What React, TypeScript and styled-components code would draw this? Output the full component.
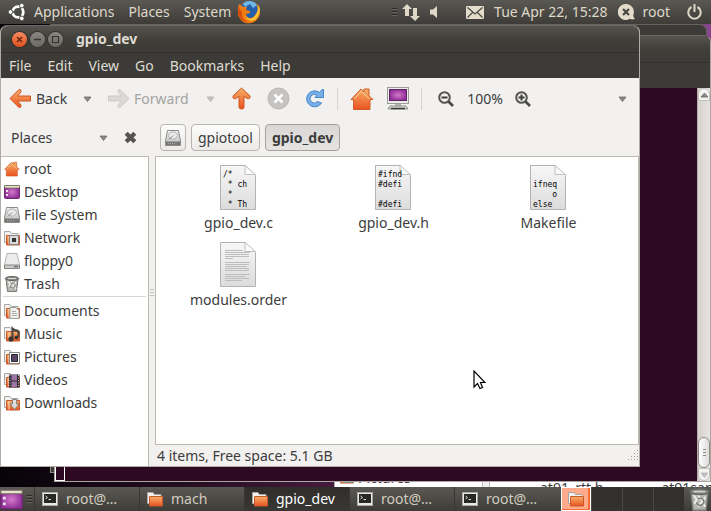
import React from "react";
import styled, { createGlobalStyle, css } from "styled-components";

const GlobalStyle = createGlobalStyle`
  * { box-sizing: border-box; }
  html, body { margin: 0; height: 100%; overflow: hidden; }
  body { font: 14px/20px "Noto Sans", "Open Sans", sans-serif; color: #3c3c3c; }
  #root { height: 100%; }
  button, select { font: inherit; color: inherit; border: 0; padding: 0; margin: 0; background: none; }
  svg { display: block; flex: none; }
`;

const Screen = styled.div`
  display: flex;
  flex-direction: column;
  height: 100vh;
`;

const panelSurface = css`
  display: flex;
  align-items: center;
  flex: none;
  height: 24px;
  background: linear-gradient(#5a5853, #3d3c38);
  color: #dfd8c8;
  white-space: nowrap;
`;

const TopPanel = styled.header`
  ${panelSurface}
  justify-content: space-between;
  padding: 0 9px 0 8px;
`;

const PanelGroup = styled.div<{ $gap: number }>`
  display: flex;
  align-items: center;
  gap: ${(p) => p.$gap}px;
`;

const PanelButton = styled.button`
  display: flex;
  align-items: center;
  gap: 8px;
`;

const Desktop = styled.main`
  position: relative;
  flex: 1;
  min-height: 0;
  overflow: hidden;
  background: linear-gradient(90deg, #070308, #2a1026 30%, #5b2450 60%, #87458c);
`;

const titleSurface = css`
  background: linear-gradient(#55534e, #3f3e39 14px, #3c3b37);
`;

const RearWindow = styled.div`
  position: absolute;
  left: 50px;
  top: 0;
  right: 4px;
  bottom: 14px;
  border: 1px solid #8d8a84;
  border-top-color: #65635d;
  border-right-color: #65635d;
  border-radius: 0 7px 0 0;
  background: #3c3b37;
`;

const TerminalWindow = styled.section`
  position: absolute;
  left: 54px;
  top: 11px;
  right: 0;
  bottom: 5px;
  display: flex;
  flex-direction: column;
  border: 1px solid #aaa5a0;
  border-top-color: #6a6862;
  border-radius: 7px 7px 0 0;
  overflow: hidden;
  background: #3c3b37;
`;

const TerminalTitle = styled.div`
  ${titleSurface}
  flex: none;
  height: 27px;
  border-bottom: 1px solid #33322e;
`;

const TerminalMenu = styled.div`
  flex: none;
  height: 25px;
`;

const TerminalBody = styled.div`
  display: flex;
  flex: 1;
  min-height: 0;
  background: #2d0922;
`;

const TerminalText = styled.div`
  display: flex;
  flex: 1;
  align-items: flex-end;
`;

const TextCaret = styled.span`
  width: 10px;
  height: 18px;
  border: 1px solid #fff;
`;

const ScrollTrack = styled.div`
  display: flex;
  flex-direction: column;
  align-items: center;
  justify-content: space-between;
  width: 13px;
  border-left: 1px solid #b5afab;
  background: linear-gradient(90deg, #d8d0cd, #e6e4e2);
`;

const ScrollEnd = styled.div`
  display: flex;
  flex-direction: column;
  width: 12px;
`;

const ScrollButton = styled.button<{ $end?: boolean }>`
  display: flex;
  align-items: center;
  justify-content: center;
  width: 12px;
  height: 13px;
  border: 1px solid #c3bfbb;
  border-radius: ${(p) => (p.$end ? "0 0 6px 6px" : "6px 6px 0 0")};
  background: #f3f2f1;
`;

const ScrollThumb = styled.div`
  display: flex;
  align-items: center;
  justify-content: center;
  height: 31px;
  border: 1px solid #8f8b87;
  border-radius: 6px;
  background: linear-gradient(90deg, #fff, #dedbd8);
`;

const HiddenBrowser = styled.div`
  position: absolute;
  left: 334px;
  right: 0;
  bottom: 0;
  height: 6px;
  display: flex;
  overflow: hidden;
  background: #fff;
`;

const HiddenSidebar = styled.div`
  display: flex;
  flex: none;
  gap: 4px;
  width: 148px;
  padding-left: 3px;
  border-left: 1px solid #b5b1ac;
  margin-top: -13px;
`;

const HiddenSplit = styled.div`
  flex: none;
  width: 8px;
  border: solid #c2beb9;
  border-width: 0 1px;
  background: #f2f1f0;
`;

const HiddenFiles = styled.div`
  display: flex;
  gap: 58px;
  padding-left: 50px;
  white-space: nowrap;
  line-height: 14px;
`;

const FileWindow = styled.section`
  position: absolute;
  left: 0;
  top: 1px;
  right: 71px;
  bottom: 20px;
  display: flex;
  flex-direction: column;
  border: 1px solid #b0aba5;
  border-top-color: #6a6862;
  border-radius: 7px 7px 0 0;
  overflow: hidden;
  background: #f2f1f0;
`;

const TitleBar = styled.div`
  ${titleSurface}
  display: flex;
  align-items: center;
  gap: 3px;
  flex: none;
  height: 27px;
  padding-left: 11px;
  border-bottom: 1px solid #33322e;
  color: #dfdbd2;
`;

const WindowButton = styled.button<{ $close?: boolean }>`
  display: grid;
  place-items: center;
  width: 15px;
  height: 15px;
  border-radius: 50%;
  background: ${(p) => (p.$close ? "linear-gradient(#f58a62, #e0501c)" : "linear-gradient(#8a8780, #6b6963)")};
  box-shadow: 0 0 0 1px #34332f;
`;

const WindowTitle = styled.h1`
  margin: 0 0 0 10px;
  font-size: 14px;
  line-height: 20px;
  font-weight: 700;
`;

const MenuBar = styled.nav`
  display: flex;
  align-items: center;
  gap: 16px;
  flex: none;
  height: 25px;
  padding-left: 8px;
  background: #3c3b37;
  color: #dfdbd2;
`;

const Toolbar = styled.div`
  display: flex;
  align-items: center;
  flex: none;
  height: 41px;
`;

const ToolButton = styled.button<{ $width: number }>`
  display: flex;
  align-items: center;
  justify-content: center;
  flex: none;
  width: ${(p) => p.$width}px;
  height: 32px;
`;

const LabelledTool = styled(ToolButton)`
  justify-content: flex-start;
  gap: 4px;
  padding-left: 4px;
  margin-left: 4px;
  &:disabled { color: #a5a3a0; }
`;

const Divider = styled.span`
  width: 1px;
  height: 22px;
  margin: 0 6px 0 5px;
  background: #d6d3d0;
`;

const ZoomLevel = styled.output`
  width: 42px;
  text-align: center;
`;

const Spacer = styled.span`
  flex: 1;
`;

const LocationRow = styled.div`
  display: flex;
  align-items: center;
  flex: none;
  height: 37px;
`;

const SidebarHead = styled.div`
  display: flex;
  align-items: center;
  flex: none;
  width: 159px;
  padding-left: 10px;
`;

const PlaceChooser = styled.label`
  display: grid;
  grid-template-columns: 1fr 10px;
  align-items: center;
  width: 98px;
  select { appearance: none; grid-area: 1 / 1 / 2 / 3; outline: 0; }
  svg { grid-area: 1 / 2; pointer-events: none; }
`;

const CloseSidebar = styled.button`
  margin-left: 15px;
`;

const PathBar = styled.nav`
  display: flex;
  gap: 5px;
`;

const PathButton = styled.button<{ $current?: boolean; $iconOnly?: boolean }>`
  display: flex;
  align-items: center;
  height: 27px;
  padding: 0 ${(p) => (p.$iconOnly ? 4 : 6)}px;
  border: 1px solid ${(p) => (p.$current ? "#a5a19b" : "#b9b5af")};
  border-radius: 4px;
  background: ${(p) => (p.$current ? "linear-gradient(#d9d7d5, #e6e4e2)" : "linear-gradient(#fcfcfc, #eceae8)")};
  font-weight: ${(p) => (p.$current ? 700 : 400)};
`;

const Panes = styled.div`
  display: flex;
  flex: 1;
  min-height: 0;
`;

const Sidebar = styled.aside`
  flex: none;
  width: 148px;
  border: solid #bdb9b3;
  border-width: 1px 1px 0 0;
  background: #fff;
`;

const PlaceList = styled.ul`
  margin: 0;
  padding: 0;
  list-style: none;
`;

const Place = styled.button`
  display: flex;
  align-items: center;
  gap: 4px;
  width: 100%;
  height: 23px;
  padding-left: 3px;
`;

const PlaceRule = styled.hr`
  height: 1px;
  margin: 1px 2px 2px;
  border: 0;
  background: #dad8d5;
`;

const Splitter = styled.div`
  display: flex;
  align-items: center;
  justify-content: center;
  width: 6px;
  padding-bottom: 36px;
`;

const MainColumn = styled.div`
  display: flex;
  flex-direction: column;
  flex: 1;
  min-width: 0;
`;

const FileGrid = styled.ul`
  display: grid;
  grid-template-columns: repeat(auto-fill, 155px);
  align-content: start;
  grid-auto-rows: 77px;
  flex: 1;
  margin: 0;
  padding: 8px 0 0 5px;
  list-style: none;
  border: 1px solid #bdb9b3;
  background: #fff;
`;

const FileItem = styled.button`
  display: flex;
  flex-direction: column;
  align-items: center;
  gap: 2px;
  width: 100%;
`;

const Thumb = styled.span`
  display: grid;
  width: 37px;
  height: 46px;
  > * { grid-area: 1 / 1; }
`;

const Preview = styled.pre`
  margin: 0;
  padding: 5px 0 0 3px;
  overflow: hidden;
  font: 8px/10px "DejaVu Sans Mono", monospace;
  color: #000;
  text-align: left;
`;

const StatusBar = styled.footer`
  display: flex;
  align-items: center;
  justify-content: space-between;
  flex: none;
  height: 21px;
  padding-left: 2px;
`;

const Pointer = styled.div`
  position: absolute;
  left: 473px;
  top: 346px;
`;

const BottomPanel = styled.footer`
  ${panelSurface}
`;

const ShowDesktop = styled.button`
  display: flex;
  flex: none;
  width: 27px;
`;

const TaskList = styled.div`
  display: flex;
  flex: 1;
  min-width: 0;
  margin-left: 2px;
`;

const Task = styled.button<{ $active?: boolean }>`
  display: flex;
  align-items: center;
  gap: 8px;
  flex: 1;
  min-width: 0;
  height: 24px;
  padding-left: 7px;
  border-left: 1px solid #383733;
  background: ${(p) => (p.$active ? "linear-gradient(#2f2e2b, #383733)" : "none")};
  color: ${(p) => (p.$active ? "#fff" : "#d2ccbf")};
`;

const Workspaces = styled.div`
  display: flex;
  flex: none;
  gap: 1px;
  margin-left: 2px;
  background: #4a4945;
`;

const Workspace = styled.button<{ $active?: boolean }>`
  display: flex;
  align-items: center;
  justify-content: center;
  width: 30px;
  height: 24px;
  background: ${(p) => (p.$active ? "#ffab8b" : "#32312e")};
  border: ${(p) => (p.$active ? "1px solid #fff" : "0")};
  box-shadow: ${(p) => (p.$active ? "inset -2px 0 #f06c38, inset 0 -1px #f06c38" : "none")};
`;

const TrashApplet = styled.button`
  flex: none;
  width: 23px;
  margin-left: 4px;
`;

const Gradients = () => (
  <defs>
    <linearGradient id="orange" x1="0" y1="0" x2="0" y2="1">
      <stop offset="0" stopColor="#f6b06a" /><stop offset="1" stopColor="#ea5320" />
    </linearGradient>
    <linearGradient id="metal" x1="0" y1="0" x2="0" y2="1">
      <stop offset="0" stopColor="#f5f5f5" /><stop offset="1" stopColor="#b9b9b9" />
    </linearGradient>
    <radialGradient id="violet">
      <stop offset="0" stopColor="#d37ac8" /><stop offset="1" stopColor="#93309a" />
    </radialGradient>
    <linearGradient id="page" x1="0" y1="0" x2="0" y2="1">
      <stop offset="0" stopColor="#f7f7f7" /><stop offset="1" stopColor="#dcdcdc" />
    </linearGradient>
  </defs>
);

type IconProps = { w: number; h?: number; box: string; children: React.ReactNode };
const Icon = ({ w, h = w, box, children }: IconProps) => (
  <svg width={w} height={h} viewBox={box} aria-hidden="true"><Gradients />{children}</svg>
);

const UbuntuLogo = () => (
  <Icon w={18} box="0 0 18 18">
    <circle cx="10" cy="9" r="5.3" fill="none" stroke="#fff" strokeWidth="2.8" />
    <path d="M10 9 0 9M10 9 15 .4M10 9 15 17.6" stroke="#4c4a46" strokeWidth="1.6" />
    <g fill="#fff" stroke="#4c4a46" strokeWidth=".9"><circle cx="2.5" cy="9" r="2.3" /><circle cx="13.8" cy="2.6" r="2.3" /><circle cx="13.8" cy="15.4" r="2.3" /></g>
  </Icon>
);

const Firefox = () => (
  <Icon w={24} box="0 0 24 24">
    <circle cx="12" cy="12" r="11" fill="#e66a0c" />
    <circle cx="12" cy="9.8" r="9" fill="#255fa9" />
    <path d="M6 4C9 0 17 0 20 5L16 8 13 4 8 7Z" fill="#6eb8e8" />
    <path d="M2 4C0 10 0 20 9 23 19 25 25 15 22 6 22 11 19 13 18 15 15 20 9 18 9 14L13 13 13 11 9 10 10 7 7 7C4 6 3 5 2 4Z" fill="#ef7c13" />
    <path d="M20 4C22 9 20 14 18 16 15 20 10 19 8 16 10 23 20 22 22 14 24 9 22 6 20 4Z" fill="#fbc63a" />
    <path d="M2 6C2 9 4 10 5 13 4 17 7 21 12 22 5 22 1 17 1 12Z" fill="#d44b0c" />
  </Icon>
);

const Grip = () => (
  <Icon w={5} h={10} box="0 0 5 10"><path d="M0 1.5H5M0 4.5H5M0 7.5H5" stroke="#2c2b28" /><path d="M0 2.5H5M0 5.5H5M0 8.5H5" stroke="#67655f" /></Icon>
);

const NetworkArrows = () => (
  <Icon w={18} h={17} box="0 0 18 17"><path d="M5 0 10 5H7V12H3V5H0ZM13 17 8 12H11V4H15V12H18Z" fill="#dfd8c8" /></Icon>
);
const Speaker = () => (
  <Icon w={8} h={12} box="0 0 8 12"><path d="M0 3.5H3L7 0V12L3 8.5H0Z" fill="#dfd8c8" /></Icon>
);
const Mail = () => (
  <Icon w={18} h={13} box="0 0 18 13"><rect width="18" height="13" rx="1" fill="#e4dccb" /><path d="M1.5 1.5 9 8 16.5 1.5M1.5 11.5 6.5 6.5M16.5 11.5 11.5 6.5" fill="none" stroke="#4a4843" strokeWidth="1.2" /></Icon>
);
const UserStatus = () => (
  <Icon w={17} h={16} box="0 0 17 16"><path d="M8 0A8 8 0 1 0 12 14.8Q14 16 17 15 15 13 15.3 11A8 8 0 0 0 8 0Z" fill="#e4dccb" /><path d="M5 5 11 11M11 5 5 11" stroke="#4a4843" strokeWidth="2.2" /></Icon>
);
const Power = () => (
  <Icon w={15} h={16} box="0 0 15 16"><path d="M4.5 3A6.2 6.2 0 1 0 10.5 3M7.5 0V8" fill="none" stroke="#dfd8c8" strokeWidth="2" /></Icon>
);

const Caret = ({ up, pale }: { up?: boolean; pale?: boolean }) => (
  <Icon w={9} h={6} box="0 0 9 6"><path d={up ? "M1 5H8L4.5 1Z" : "M1 1H8L4.5 5.5Z"} fill={pale ? "#c4c2c0" : "#8b8987"} stroke={pale ? "#b5b3b1" : "#6b6967"} strokeWidth=".8" /></Icon>
);

const arrowShape = "M10 1.5Q12.5 1 12 4L8.5 8H21.5V13H8.5L12 17Q12.5 20 10 19.5L1 10.5Z";
const BackArrow = () => (
  <Icon w={23} h={21} box="0 0 23 21"><path d={arrowShape} fill="url(#orange)" stroke="#d0521c" strokeLinejoin="round" /></Icon>
);
const ForwardArrow = () => (
  <Icon w={23} h={21} box="0 0 23 21"><g transform="matrix(-1 0 0 1 23 0)"><path d={arrowShape} fill="#dcdad8" stroke="#cbc9c7" strokeLinejoin="round" /></g></Icon>
);
const UpArrow = () => (
  <Icon w={19} h={23} box="0 0 19 23"><path d="M9.5 1 18 9Q18.500 12.500 15 11.500L12 9V20Q12 22 9.500 22T7 20V9L4 11.500Q.5 12.500 1 9Z" fill="url(#orange)" stroke="#d0521c" strokeLinejoin="round" /></Icon>
);
const Stop = () => (
  <Icon w={23} box="0 0 23 23"><circle cx="11.5" cy="11.5" r="10.5" fill="#c6c4c2" stroke="#b9b7b5" /><path d="M7.5 7.5 15.5 15.5M15.5 7.5 7.5 15.5" stroke="#fff" strokeWidth="2.6" /></Icon>
);
const Reload = () => (
  <Icon w={21} box="0 0 21 21">
    <path d="M17.500 15A8 8 0 1 1 15.500 4.500L18 1.500H19.500V9.500H11L13 7.300A4.300 4.300 0 1 0 13.500 13.500Z" fill="#78afe6" stroke="#4584c8" strokeLinejoin="round" />
  </Icon>
);
const Home = ({ size = 24 }: { size?: number }) => (
  <Icon w={size} box="0 0 24 24"><path d="M1 12.5 11 2 14 5V2H19V9L23 12.5H20V22.5H3.5V12.5Z" fill="url(#orange)" stroke="#cf5b25" strokeLinejoin="round" /><path d="M4 12 11 4.5 20 12" stroke="#fbd09c" fill="none" /></Icon>
);
const Computer = () => (
  <Icon w={22} h={23} box="0 0 22 23"><rect x=".5" y=".5" width="21" height="16" fill="#ececea" stroke="#9b9b98" /><rect x="2.5" y="2.5" width="17" height="11" fill="url(#violet)" stroke="#5c2563" /><path d="M8 17H14V19H8Z" fill="#b5b5b3" /><path d="M3 19H19L21 22H1Z" fill="#dadad8" stroke="#8d8d8a" /><path d="M4 21.5H18" stroke="#393937" strokeWidth="1.5" /></Icon>
);
const Magnifier = ({ plus }: { plus?: boolean }) => (
  <Icon w={16} box="0 0 16 16"><circle cx="6.5" cy="6.5" r="5.3" fill="none" stroke="#555452" strokeWidth="2" /><path d="M10.5 10.5 15 15" stroke="#4a4947" strokeWidth="2.6" /><path d={plus ? "M3.5 6.5H9.5M6.5 3.5V9.5" : "M3.5 6.5H9.5"} stroke="#3d3c3a" strokeWidth="2" /></Icon>
);
const Cross = () => (
  <Icon w={13} box="0 0 12 12"><path d="M2 2 10 10M10 2 2 10" stroke="#555452" strokeWidth="4" /></Icon>
);
const Drive = () => (
  <Icon w={16} box="0 0 16 16"><path d="M2.5.5H13.5L15.5 11V15.5H.5V11Z" fill="url(#metal)" stroke="#8a8a88" /><ellipse cx="8" cy="5.5" rx="4.6" ry="3.6" fill="#e9e9e9" stroke="#b0b0ae" /><path d="M8 5.5 4 9.5" stroke="#888" /><path d="M1 11.5H15V15H1Z" fill="#777775" /><path d="M3 13.5H11" stroke="#aaa" strokeDasharray="1 1" /></Icon>
);
const Floppy = () => (
  <Icon w={16} box="0 0 16 16"><path d="M3 .5H13L15.5 11.5V15.5H.5V11.5Z" fill="#ececec" stroke="#b3b3b1" /><path d="M.5 12H15.5V15.5H.5Z" fill="#c8c8c6" stroke="#858583" /><path d="M10 13.7H14" stroke="#555" /></Icon>
);
const DesktopIcon = ({ w = 16, h = 14 }: { w?: number; h?: number }) => (
  <Icon w={w} h={h} box="0 0 16 14"><rect x=".5" y=".5" width="15" height="13" rx="1" fill="url(#violet)" stroke="#6b2a70" /><path d="M.5.5H15.5V3H.5Z" fill="#e7e3ce" stroke="#716e58" strokeWidth=".8" /><path d="M2 5H4V7H2ZM2 9H4V11H2Z" fill="#f0dff0" /></Icon>
);
const TrashIcon = ({ w = 16, h = 16 }: { w?: number; h?: number }) => (
  <Icon w={w} h={h} box="0 0 16 16"><path d="M2 3H14L12.5 15.5H3.5Z" fill="#b3b5b1" stroke="#777975" /><path d="M4 5 6 8 4.5 11M7 5 10 9 7 13M12 6 10 10 12 13" stroke="#ececea" strokeWidth="1.4" fill="none" /><ellipse cx="8" cy="2.5" rx="6.8" ry="2" fill="#8d8f8b" stroke="#5f615d" /><path d="M4 2.5H12" stroke="#d5d6d3" /><path d="M7 7.5A2.5 2.5 0 1 1 6 10" fill="none" stroke="#777975" /></Icon>
);

type Emblem = "none" | "network" | "document" | "music" | "picture" | "video" | "download";
const emblems: Record<Emblem, React.ReactNode> = {
  none: null,
  network: <><path d="M5.5 5.5H14.5V14.5H5.5Z" fill="#dadad8" stroke="#858583" /><path d="M8 8H12V12H8Z" fill="#333" /></>,
  document: <><path d="M6 4.5H12L15 7.5V15.5H6Z" fill="#f1f1ef" stroke="#9b9b98" /><path d="M8 8.5H12M8 10.5H13M8 12.5H13" stroke="#aaa" /></>,
  music: <><path d="M8.5 12V2.5Q11 5 14.5 5.5V11" fill="none" stroke="#454543" strokeWidth="2" /><circle cx="7" cy="13" r="2.6" fill="#353533" /><circle cx="12.5" cy="11.5" r="2" fill="#353533" /></>,
  picture: <><path d="M5.5 3.5H15.5V14.5H5.5Z" fill="#fff" stroke="#858583" /><path d="M7.5 5.5H13.5V12.5H7.5Z" fill="#5b4668" stroke="#292630" /></>,
  video: <><path d="M5 2.5H15.5V15.5H5Z" fill="#2e2930" /><path d="M7.5 3H13V8.5H7.5ZM7.5 9.5H13V15H7.5Z" fill="#9b76a5" /><path d="M6 3V15M14.5 3V15" stroke="#c8c1ca" strokeDasharray="1 1.5" /></>,
  download: <path d="M8.5 4.5H12.5V9H15L10.5 14.5 6 9H8.5Z" fill="#dededc" stroke="#81817e" />,
};
const Folder = ({ kind = "none", size = 16 }: { kind?: Emblem; size?: number }) => (
  <Icon w={size} box="0 0 16 16"><path d="M.5 12.5V1.500H6L7.500 3.500H14V12.500Z" fill="#f2f1ef" stroke="#a9a7a3" /><path d="M2.5 15V5.5H15.5V15Z" fill="url(#orange)" stroke="#c65a2d" />{kind !== "none" && <path d="M5 6V14.5" stroke="#f9dec0" />}{emblems[kind]}</Icon>
);
const TerminalIcon = () => (
  <Icon w={16} h={14} box="0 0 16 14"><rect x=".5" y=".5" width="15" height="13" fill="#e9e9e7" stroke="#aaa9a6" /><rect x="2" y="2" width="12" height="9" fill="#272725" /><path d="M3.5 4 5.5 5.5 3.5 7M6.5 7.5H9" stroke="#ddd" fill="none" /></Icon>
);
const Page = ({ lined }: { lined?: boolean }) => (
  <Icon w={37} h={46} box="0 0 37 46">
    <path d="M.5.5H25.5L35.5 10.500V44.500H.5Z" fill="url(#page)" stroke="#b3b3b1" />
    <path d="M25 .5V9.500H35.500Z" fill="#fbfbfb" stroke="#c0c0be" />
    {lined && <path d="M5 8.5H23M5 10.5H30M5 12.5H29M5 14.5H29M5 16.5H13M5 20.5H30M5 22.5H29M5 24.5H27M5 26.5H29M5 28.5H29M5 32.5H30M5 34.5H25M5 36.5H29M5 38.5H22" stroke="#bdbdbb" />}
  </Icon>
);

const menus = ["File", "Edit", "View", "Go", "Bookmarks", "Help"];
const devices = [
  { name: "root", icon: <Home size={16} /> },
  { name: "Desktop", icon: <DesktopIcon /> },
  { name: "File System", icon: <Drive /> },
  { name: "Network", icon: <Folder kind="network" /> },
  { name: "floppy0", icon: <Floppy /> },
  { name: "Trash", icon: <TrashIcon /> },
];
const bookmarks: { name: string; kind: Emblem }[] = [
  { name: "Documents", kind: "document" },
  { name: "Music", kind: "music" },
  { name: "Pictures", kind: "picture" },
  { name: "Videos", kind: "video" },
  { name: "Downloads", kind: "download" },
];
const files = [
  { name: "gpio_dev.c", preview: "/*\n * ch\n *\n * Th" },
  { name: "gpio_dev.h", preview: "#ifnd\n#defi\n\n#defi" },
  { name: "Makefile", preview: " \nifneq\n    o\nelse" },
  { name: "modules.order", preview: "" },
];
const tasks = [
  { name: "root@…", terminal: true },
  { name: "mach" },
  { name: "gpio_dev", active: true },
  { name: "root@…", terminal: true },
  { name: "root@…", terminal: true },
];

export default function App() {
  return (
    <Screen>
      <GlobalStyle />
      <TopPanel>
        <PanelGroup $gap={14}>
          <PanelButton><UbuntuLogo />Applications</PanelButton>
          <PanelButton>Places</PanelButton>
          <PanelGroup $gap={6}>
            <PanelButton>System</PanelButton>
            <PanelButton aria-label="Firefox"><Firefox /></PanelButton>
          </PanelGroup>
        </PanelGroup>
        <PanelGroup $gap={10}>
          <PanelGroup $gap={5}><Grip /><PanelButton aria-label="Network"><NetworkArrows /></PanelButton></PanelGroup>
          <PanelGroup $gap={28}>
            <PanelButton aria-label="Volume"><Speaker /></PanelButton>
            <PanelButton aria-label="Messages"><Mail /></PanelButton>
          </PanelGroup>
          <PanelButton>Tue Apr 22, 15:28</PanelButton>
          <PanelGroup $gap={17}>
            <PanelButton><UserStatus />root</PanelButton>
            <PanelButton aria-label="Power"><Power /></PanelButton>
          </PanelGroup>
        </PanelGroup>
      </TopPanel>

      <Desktop>
        <HiddenBrowser>
          <HiddenSidebar><Folder kind="picture" />Pictures</HiddenSidebar>
          <HiddenSplit />
          <HiddenFiles><span>at91_rtt.h</span><span>at91sam9</span></HiddenFiles>
        </HiddenBrowser>
        <RearWindow />
        <TerminalWindow aria-label="Terminal">
          <TerminalTitle />
          <TerminalMenu />
          <TerminalBody>
            <TerminalText><TextCaret /></TerminalText>
            <ScrollTrack>
              <ScrollButton aria-label="Scroll up"><Caret up /></ScrollButton>
              <ScrollEnd>
                <ScrollThumb><Icon w={5} h={8} box="0 0 5 8"><path d="M1 .5H4M1 3.5H4M1 6.5H4" stroke="#8f8b87" /></Icon></ScrollThumb>
                <ScrollButton $end aria-label="Scroll down"><Caret pale /></ScrollButton>
              </ScrollEnd>
            </ScrollTrack>
          </TerminalBody>
        </TerminalWindow>

        <FileWindow aria-label="gpio_dev">
          <TitleBar>
            <WindowButton $close aria-label="Close"><Icon w={9} box="0 0 9 9"><path d="M2 2 7 7M7 2 2 7" stroke="#5c2410" strokeWidth="1.3" /></Icon></WindowButton>
            <WindowButton aria-label="Minimize"><Icon w={9} box="0 0 9 9"><path d="M1 4.5H8" stroke="#34332f" strokeWidth="1.3" /></Icon></WindowButton>
            <WindowButton aria-label="Maximize"><Icon w={9} box="0 0 9 9"><path d="M1.5 1.5H7.5V7.5H1.5Z" fill="none" stroke="#34332f" strokeWidth="1.2" /></Icon></WindowButton>
            <WindowTitle>gpio_dev</WindowTitle>
          </TitleBar>
          <MenuBar>{menus.map((m) => <button key={m}>{m}</button>)}</MenuBar>
          <Toolbar>
            <LabelledTool $width={70}><BackArrow />Back</LabelledTool>
            <ToolButton $width={24} aria-label="Back history"><Caret /></ToolButton>
            <LabelledTool $width={95} disabled><ForwardArrow />Forward</LabelledTool>
            <ToolButton $width={24} disabled aria-label="Forward history"><Caret pale /></ToolButton>
            <ToolButton $width={38} aria-label="Up"><UpArrow /></ToolButton>
            <ToolButton $width={36} disabled aria-label="Stop"><Stop /></ToolButton>
            <ToolButton $width={36} aria-label="Reload"><Reload /></ToolButton>
            <Divider />
            <ToolButton $width={36} aria-label="Home"><Home /></ToolButton>
            <ToolButton $width={36} aria-label="Computer"><Computer /></ToolButton>
            <Divider />
            <ToolButton $width={36} aria-label="Zoom out"><Magnifier /></ToolButton>
            <ZoomLevel>100%</ZoomLevel>
            <ToolButton $width={34} aria-label="Zoom in"><Magnifier plus /></ToolButton>
            <Spacer />
            <ToolButton $width={34} aria-label="More"><Caret /></ToolButton>
          </Toolbar>
          <LocationRow>
            <SidebarHead>
              <PlaceChooser>
                <select aria-label="Side pane"><option>Places</option></select>
                <Caret />
              </PlaceChooser>
              <CloseSidebar aria-label="Close side pane"><Cross /></CloseSidebar>
            </SidebarHead>
            <PathBar>
              <PathButton $iconOnly aria-label="File System"><Drive /></PathButton>
              <PathButton>gpiotool</PathButton>
              <PathButton $current>gpio_dev</PathButton>
            </PathBar>
          </LocationRow>
          <Panes>
            <Sidebar>
              <PlaceList>{devices.map((d) => <li key={d.name}><Place>{d.icon}{d.name}</Place></li>)}</PlaceList>
              <PlaceRule />
              <PlaceList>{bookmarks.map((b) => <li key={b.name}><Place><Folder kind={b.kind} />{b.name}</Place></li>)}</PlaceList>
            </Sidebar>
            <Splitter><Icon w={4} h={9} box="0 0 4 9"><path d="M0 .5H4M0 3.5H4M0 6.5H4" stroke="#c5c2be" /></Icon></Splitter>
            <MainColumn>
              <FileGrid>
                {files.map((f) => (
                  <li key={f.name}>
                    <FileItem>
                      <Thumb><Page lined={!f.preview} />{f.preview && <Preview>{f.preview}</Preview>}</Thumb>
                      {f.name}
                    </FileItem>
                  </li>
                ))}
              </FileGrid>
              <StatusBar>
                4 items, Free space: 5.1 GB
                <Icon w={13} h={13} box="0 0 13 13"><path d="M11.5 1V12M8.5 4V12M5.5 7V12M2.5 10V12" stroke="#a5a19c" strokeDasharray="1 2" /></Icon>
              </StatusBar>
            </MainColumn>
          </Panes>
        </FileWindow>
        <Pointer>
          <Icon w={13} h={20} box="0 0 13 20"><path d="M1 1V17L4.5 13.5 7 18.5 9.5 17.5 7.5 12.5H12Z" fill="#fff" stroke="#000" strokeWidth="1.2" /></Icon>
        </Pointer>
      </Desktop>

      <BottomPanel>
        <ShowDesktop aria-label="Show desktop"><DesktopIcon w={23} h={21} /></ShowDesktop>
        <Grip />
        <TaskList>
          {tasks.map((t, i) => (
            <Task key={i} $active={t.active}>{t.terminal ? <TerminalIcon /> : <Folder />}{t.name}</Task>
          ))}
        </TaskList>
        <Workspaces>
          <Workspace $active aria-label="Workspace 1"><Folder /></Workspace>
          <Workspace aria-label="Workspace 2" />
          <Workspace aria-label="Workspace 3" />
          <Workspace aria-label="Workspace 4" />
        </Workspaces>
        <TrashApplet aria-label="Trash"><TrashIcon w={23} h={23} /></TrashApplet>
      </BottomPanel>
    </Screen>
  );
}
